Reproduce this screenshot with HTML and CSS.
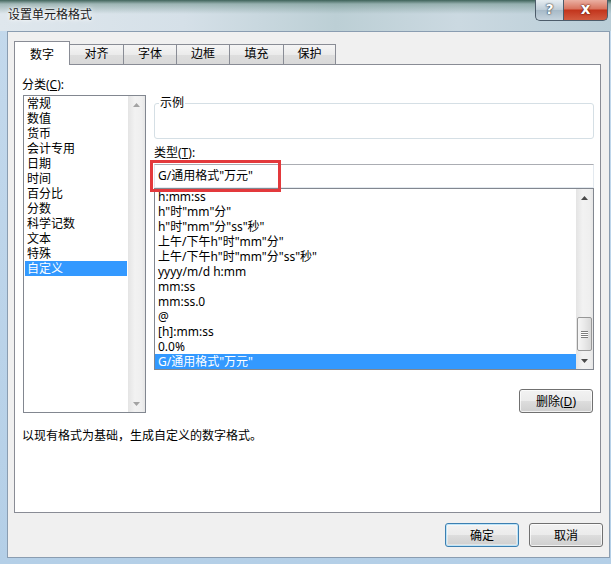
FILE: index.html
```html
<!DOCTYPE html>
<html lang="zh-CN">
<head>
    <meta charset="UTF-8">
    <title>设置单元格格式</title>
    <link rel="stylesheet" href="styles.css">
</head>
<body>
    <div class="window">
        <!-- Judul jendela -->
        <div class="titlebar">
            <span class="title">设置单元格格式</span>
            <div class="caption">
                <span class="cap-btn cap-help">?</span>
                <span class="cap-btn cap-close">x</span>
            </div>
        </div>

        <div class="client">
            <div class="tabs">
                <div class="tab active t1">数字</div>
                <div class="tab t2">对齐</div>
                <div class="tab t3">字体</div>
                <div class="tab t4">边框</div>
                <div class="tab t5">填充</div>
                <div class="tab t6">保护</div>
            </div>

            <div class="panel">
                <div class="cols">
                    <div class="left">
                        <div class="label">分类(<u>C</u>):</div>
                        <div class="listbox catlist">
                            <div class="items cat-items">
                                <div class="item">常规</div>
                                <div class="item">数值</div>
                                <div class="item">货币</div>
                                <div class="item">会计专用</div>
                                <div class="item">日期</div>
                                <div class="item">时间</div>
                                <div class="item">百分比</div>
                                <div class="item">分数</div>
                                <div class="item">科学记数</div>
                                <div class="item">文本</div>
                                <div class="item">特殊</div>
                                <div class="item sel">自定义</div>
                            </div>
                            <div class="vscroll disabled">
                                <div class="arrow"><svg width="7" height="4" viewBox="0 0 7 4"><polygon points="0,4 7,4 3.5,0"/></svg></div>
                                <div class="track"></div>
                                <div class="arrow"><svg width="7" height="4" viewBox="0 0 7 4"><polygon points="0,0 7,0 3.5,4"/></svg></div>
                            </div>
                        </div>
                    </div>

                    <div class="right">
                        <fieldset class="sample">
                            <legend>示例</legend>
                        </fieldset>
                        <div class="label type-label">类型(<u>T</u>):</div>
                        <div class="typebox">
                            G/通用格式"万元"
                            <span class="mark"></span>
                        </div>
                        <div class="listbox fmtlist">
                            <div class="items fmt-items">
                                <div class="item">h:mm:ss</div>
                                <div class="item">h"时"mm"分"</div>
                                <div class="item">h"时"mm"分"ss"秒"</div>
                                <div class="item">上午/下午h"时"mm"分"</div>
                                <div class="item">上午/下午h"时"mm"分"ss"秒"</div>
                                <div class="item">yyyy/m/d h:mm</div>
                                <div class="item">mm:ss</div>
                                <div class="item">mm:ss.0</div>
                                <div class="item">@</div>
                                <div class="item">[h]:mm:ss</div>
                                <div class="item">0.0%</div>
                                <div class="item sel">G/通用格式"万元"</div>
                            </div>
                            <div class="vscroll">
                                <div class="arrow"><svg width="7" height="4" viewBox="0 0 7 4"><polygon points="0,4 7,4 3.5,0"/></svg></div>
                                <div class="track">
                                    <div class="thumb"><span class="grip"></span></div>
                                </div>
                                <div class="arrow"><svg width="7" height="4" viewBox="0 0 7 4"><polygon points="0,0 7,0 3.5,4"/></svg></div>
                            </div>
                        </div>
                        <div class="del-row">
                            <button class="btn">删除(<u>D</u>)</button>
                        </div>
                    </div>
                </div>

                <div class="desc">以现有格式为基础，生成自定义的数字格式。</div>
            </div>

            <div class="footer">
                <button class="btn btn-default">确定</button>
                <button class="btn">取消</button>
            </div>
        </div>
    </div>
</body>
</html>
```

FILE: styles.css
```css
/* Style dasar */
* {
    box-sizing: border-box;
}

body {
    margin: 0;
    font-family: "Noto Sans", "Noto Sans CJK SC", sans-serif;
    font-size: 12px;
    color: #000;
}

/* Bingkai jendela */
.window {
    width: 611px;
    height: 564px;
    display: flex;
    flex-direction: column;
    padding: 0 1px 6px 7px;
    background: linear-gradient(to bottom, #c4d9ec, #b4cfe7);
}

.titlebar {
    height: 31px;
    margin: 0 -1px 0 -7px;
    display: flex;
    justify-content: space-between;
    align-items: flex-start;
    background:
        linear-gradient(to bottom, rgba(38, 78, 66, 0.85) 0, rgba(110, 145, 138, 0.55) 4px, rgba(255, 255, 255, 0) 14px),
        linear-gradient(to right, #dfe7ed 0, #d5e0e8 30%, #bccfd5 55%, #cbd9e1 75%, #b9cdd7 100%);
}

.title {
    margin: 7px 0 0 8px;
    line-height: 15px;
    color: #1b1b1b;
    text-shadow: 0 0 6px #fff, 0 0 3px #fff;
}

.caption {
    display: flex;
    margin-right: 3px;
}

.cap-btn {
    height: 21px;
    border: 1px solid #4d5c6a;
    border-top: none;
    color: #fff;
    font-family: "DejaVu Sans", sans-serif;
    font-weight: bold;
    text-align: center;
    line-height: 19px;
}

.cap-help {
    width: 28px;
    font-size: 14px;
    border-radius: 0 0 0 5px;
    border-right: none;
    background: linear-gradient(to bottom, #e6edf2, #bccbd6 50%, #a6b9c7 51%, #c5d3dd);
    text-shadow: 0 0 2px #25313b, 0 0 1px #25313b;
}

.cap-close {
    width: 45px;
    font-size: 15px;
    border-radius: 0 0 5px 0;
    background: linear-gradient(to bottom, #eab0a2, #d8735e 45%, #c2341c 50%, #d25b40);
    text-shadow: 0 0 2px #5a1208, 0 0 1px #5a1208;
}

/* Area isi */
.client {
    flex: 1;
    display: flex;
    flex-direction: column;
    background-color: #f0f0f0;
    border: 1px solid #8a9db1;
}

/* Style tab */
.tabs {
    display: flex;
    align-items: flex-end;
    height: 23px;
    margin: 9px 0 0 6px;
}

.tab {
    height: 20px;
    margin-left: -1px;
    border: 1px solid #898c95;
    border-bottom: none;
    background: linear-gradient(to bottom, #f5f5f5, #ebebeb 50%, #dedede 51%, #d9d9d9);
    text-align: center;
    line-height: 18px;
}

.tab.active {
    height: 24px;
    margin-left: 0;
    margin-bottom: -1px;
    position: relative;
    z-index: 1;
    background: #fff;
    padding-top: 5px;
    line-height: 15px;
}

.t1 { width: 56px; }
.t2 { width: 55px; }
.t3 { width: 54px; }
.t4 { width: 54px; }
.t5 { width: 55px; }
.t6 { width: 53px; }

.panel {
    width: 587px;
    height: 449px;
    margin-left: 6px;
    padding: 12px 0 0 8px;
    border: 1px solid #898c95;
    background-color: #fff;
}

.cols {
    display: flex;
    gap: 8px;
}

.left {
    width: 123px;
}

.right {
    width: 440px;
}

.label {
    line-height: 15px;
    margin-left: -1px;
}

/* Style listbox */
.listbox {
    display: flex;
    border: 1px solid #828790;
    background-color: #fff;
}

.catlist {
    margin-top: 3px;
    height: 318px;
}

.items {
    flex: 1;
    overflow: hidden;
}

.cat-items {
    padding: 0 1px;
}

.item {
    line-height: 15px;
    white-space: nowrap;
}

.cat-items .item {
    padding-left: 2px;
}

.fmt-items .item {
    padding-left: 3px;
}

.item.sel {
    background-color: #3399ff;
    color: #fff;
}

.fmtlist {
    height: 182px;
}

/* Scrollbar */
.vscroll {
    width: 17px;
    display: flex;
    flex-direction: column;
    background: linear-gradient(to right, #e4e4e4, #f2f2f2 40%, #efefef 80%, #e6e6e6);
}

.arrow {
    height: 17px;
    display: flex;
    align-items: center;
    justify-content: center;
}

.arrow polygon {
    fill: #4a4a4a;
}

.vscroll.disabled .arrow polygon {
    fill: #a3a3a3;
}

.track {
    flex: 1;
}

.thumb {
    height: 34px;
    margin: 111px 1px 0 1px;
    border: 1px solid #979797;
    border-radius: 2px;
    background: linear-gradient(to right, #f6f6f6, #e9e9e9 50%, #d9d9d9);
    display: flex;
    align-items: center;
    justify-content: center;
}

.grip {
    width: 7px;
    height: 7px;
    background: repeating-linear-gradient(to bottom, #7d7d7d 0, #7d7d7d 1px, #fff 1px, #fff 2px);
}

/* Kotak contoh */
.sample {
    height: 43px;
    margin: 19px 0 0 0;
    padding: 0 0 0 4px;
    border: 1px solid #d5dfe5;
    border-radius: 3px;
}

.sample legend {
    padding: 0 1px;
    line-height: 14px;
}

.type-label {
    margin-top: 6px;
    margin-left: 0;
}

.typebox {
    position: relative;
    height: 24px;
    margin-top: 4px;
    padding-left: 3px;
    line-height: 22px;
    border: 1px solid;
    border-color: #abadb3 #e3e9ef #e3e9ef #e2e3ea;
    background-color: #fff;
}

/* Tanda merah */
.mark {
    position: absolute;
    left: -5px;
    top: -5px;
    width: 131px;
    height: 32px;
    border: 3px solid #e3393c;
}

.del-row {
    display: flex;
    justify-content: flex-end;
    margin-top: 19px;
    padding-right: 1px;
}

.desc {
    margin-top: 15px;
    margin-left: -1px;
    line-height: 15px;
}

/* Style tombol */
.btn {
    width: 74px;
    height: 24px;
    padding: 0;
    font-family: inherit;
    font-size: 12px;
    color: #000;
    border: 1px solid #707070;
    border-radius: 3px;
    background: linear-gradient(to bottom, #f2f2f2, #ebebeb 50%, #dddddd 51%, #cfcfcf);
    box-shadow: inset 0 0 0 1px rgba(255, 255, 255, 0.7);
}

.btn-default {
    border-color: #3c7fb1;
    box-shadow: inset 0 0 0 1px #bde4f8, inset 0 0 0 2px rgba(255, 255, 255, 0.4);
}

.footer {
    display: flex;
    justify-content: flex-end;
    gap: 10px;
    margin-top: 10px;
    padding-right: 6px;
}
```
